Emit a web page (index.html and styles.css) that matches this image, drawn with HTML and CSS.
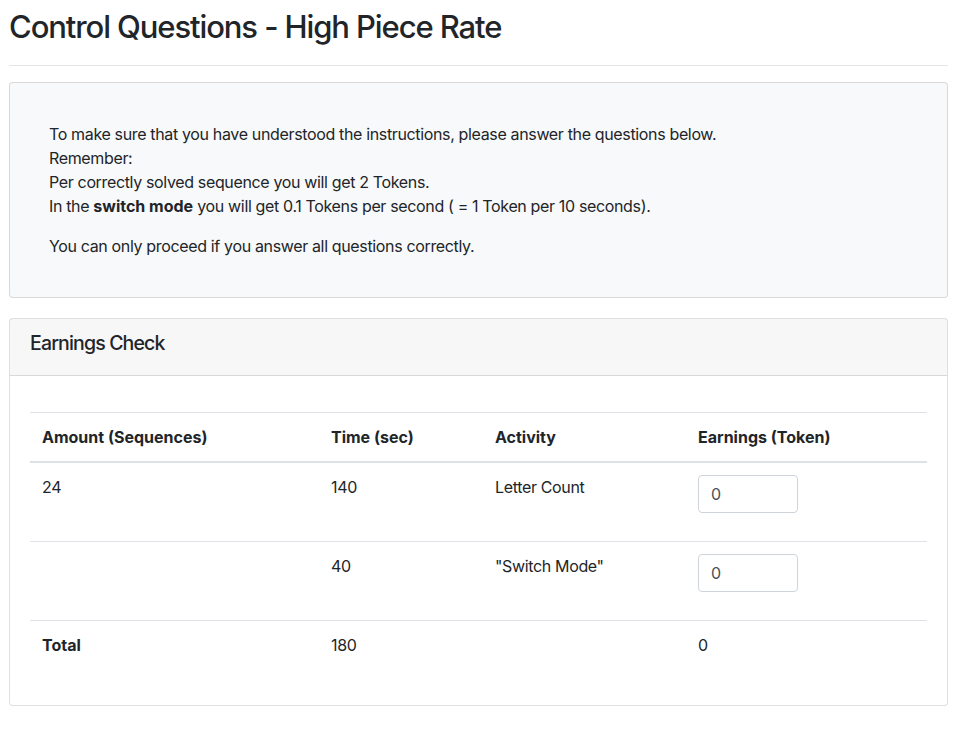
FILE: index.html
```html
<!DOCTYPE html>
<html lang="en">
<head>
<meta charset="utf-8">
<title>Control Questions - High Piece Rate</title>
<link rel="stylesheet" href="styles.css">
</head>
<body>
<div class="page">
  <h2 class="page-title">Control Questions - High Piece Rate</h2>
  <hr class="divider">
  <div class="card card-light">
    <div class="intro">
      <p>To make sure that you have understood the instructions, please answer the questions below.<br>
      Remember:<br>
      Per correctly solved sequence you will get 2 Tokens.<br>
      In the <b>switch mode</b> you will get 0.1 Tokens per second ( = 1 Token per 10 seconds).</p>
      <p class="last">You can only proceed if you answer all questions correctly.</p>
    </div>
  </div>
  <div class="card">
    <div class="card-header">Earnings Check</div>
    <div class="card-body">
      <table class="earnings">
        <thead>
          <tr>
            <th class="c1">Amount (Sequences)</th>
            <th class="c2">Time (sec)</th>
            <th class="c3">Activity</th>
            <th class="c4">Earnings (Token)</th>
          </tr>
        </thead>
        <tbody>
          <tr>
            <td>24</td>
            <td>140</td>
            <td>Letter Count</td>
            <td><input class="field" type="text" value="0"></td>
          </tr>
          <tr>
            <td></td>
            <td>40</td>
            <td>"Switch Mode"</td>
            <td><input class="field" type="text" value="0"></td>
          </tr>
          <tr>
            <th>Total</th>
            <td>180</td>
            <td></td>
            <td>0</td>
          </tr>
        </tbody>
      </table>
    </div>
  </div>
</div>
</body>
</html>
```
FILE: styles.css
```css
* { box-sizing: border-box; }
html, body {
  margin: 0;
  padding: 0;
  background: #fff;
}
body {
  font-family: Inter, "Noto Sans", "Liberation Sans", sans-serif;
  font-size: 16px;
  line-height: 1.5;
  color: #212529;
  letter-spacing: -0.35px;
}
b, th { letter-spacing: 0; }
.page {
  padding: 0 9px;
}
.page-title {
  margin: 0;
  padding-top: 8px;
  font-size: 31px;
  font-weight: 500;
  line-height: 1.2;
  letter-spacing: -1.1px;
}
.divider {
  margin: 20px 0 16px;
  border: 0;
  border-top: 1px solid rgba(0,0,0,.1);
}
.card {
  border: 1px solid rgba(0,0,0,.125);
  border-radius: 4px;
  background: #fff;
  margin-bottom: 20px;
}
.card-light {
  background: #f8f9fa;
}
.intro {
  padding: 39px 39px 39px;
}
.intro p {
  margin: 0 0 16px;
}
.intro p.last { margin-bottom: 0; }
.card-header {
  background: rgba(0,0,0,.03);
  border-bottom: 1px solid rgba(0,0,0,.125);
  padding: 12px 20px 20px;
  font-size: 19.5px;
  font-weight: 500;
  line-height: 24px;
  letter-spacing: -0.85px;
}
.card-body {
  padding: 36px 20px 20px;
}
.earnings {
  width: 100%;
  border-collapse: collapse;
  margin-bottom: 16px;
}
.earnings th, .earnings td {
  text-align: left;
  vertical-align: top;
  padding: 12px;
  border-top: 1px solid #dee2e6;
}
.earnings th { font-weight: 700; }
.earnings thead th {
  border-bottom: 2px solid #dee2e6;
}
.c1 { width: 289px; }
.c2 { width: 164px; }
.c3 { width: 203px; }
.field {
  display: block;
  width: 100px;
  height: 38px;
  margin-bottom: 16px;
  padding: 6px 12px;
  font: inherit;
  color: #495057;
  background: #fff;
  border: 1px solid #ced4da;
  border-radius: 4px;
}
```
